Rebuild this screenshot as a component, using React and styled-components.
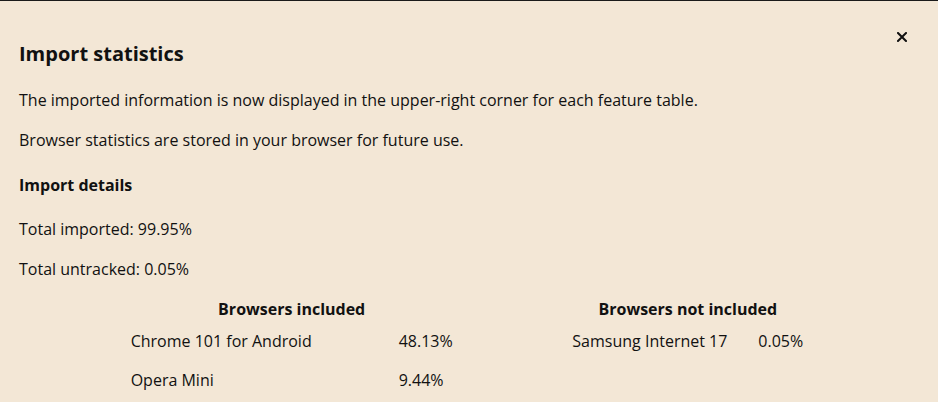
import React from 'react'
import styled, { createGlobalStyle } from 'styled-components'

const GlobalStyle = createGlobalStyle`
  html, body {
    margin: 0;
    padding: 0;
    background: #f3e7d6;
  }
  body {
    font-family: "Open Sans", "Liberation Sans", sans-serif;
    color: #111;
    border-top: 1px solid #1a1a1a;
  }
`

const Dialog = styled.div`
  position: relative;
  padding: 39px 19px 0;
`

const CloseButton = styled.button`
  position: absolute;
  top: 29px;
  right: 29px;
  width: 14px;
  height: 14px;
  padding: 0;
  border: none;
  background: none;
  cursor: pointer;
  display: flex;
  align-items: center;
  justify-content: center;
`

const Title = styled.h2`
  margin: 0 0 20px;
  font-size: 20px;
  line-height: 28px;
  font-weight: 700;
`

const Text = styled.p`
  margin: ${p => p.top || 0}px 0 0;
  font-size: 16px;
  line-height: 24px;
`

const SubTitle = styled.h3`
  margin: 21px 0 0;
  font-size: 16px;
  line-height: 24px;
  font-weight: 700;
`

const Tables = styled.div`
  display: flex;
  align-items: flex-start;
  justify-content: space-evenly;
  margin-top: 16px;
  padding-right: 4px;
`

const Table = styled.table`
  border-collapse: collapse;
  font-size: 16px;
  line-height: 24px;
`

const Head = styled.th`
  padding: 0 8px;
  font-weight: 700;
  text-align: center;
`

const Cell = styled.td`
  padding: 8px 8px 7px;
  width: ${p => p.w}px;
  box-sizing: border-box;
  text-align: left;
  white-space: nowrap;
`

const included = [
    ['Chrome 101 for Android', '48.13%'],
    ['Opera Mini', '9.44%'],
]

const notIncluded = [
    ['Samsung Internet 17', '0.05%'],
]

const StatsTable = ({ title, rows, widths }) => (
    <Table>
        <thead>
            <tr>
                <Head colSpan={2}>{title}</Head>
            </tr>
        </thead>
        <tbody>
            {rows.map(([name, share]) => (
                <tr key={name}>
                    <Cell w={widths[0]}>{name}</Cell>
                    <Cell w={widths[1]}>{share}</Cell>
                </tr>
            ))}
        </tbody>
    </Table>
)

const App = () => (
    <>
        <GlobalStyle />
        <Dialog>
            <CloseButton aria-label="Close">
                <svg width="10" height="10" viewBox="0 0 10 10">
                    <path d="M1 1 L9 9 M9 1 L1 9" stroke="#111" strokeWidth="2" strokeLinecap="square" />
                </svg>
            </CloseButton>
            <Title>Import statistics</Title>
            <Text>The imported information is now displayed in the upper-right corner for each feature table.</Text>
            <Text top={16}>Browser statistics are stored in your browser for future use.</Text>
            <SubTitle>Import details</SubTitle>
            <Text top={20}>Total imported: 99.95%</Text>
            <Text top={16}>Total untracked: 0.05%</Text>
            <Tables>
                <StatsTable title="Browsers included" rows={included} widths={[268, 70]} />
                <StatsTable title="Browsers not included" rows={notIncluded} widths={[186, 61]} />
            </Tables>
        </Dialog>
    </>
)

export default App
